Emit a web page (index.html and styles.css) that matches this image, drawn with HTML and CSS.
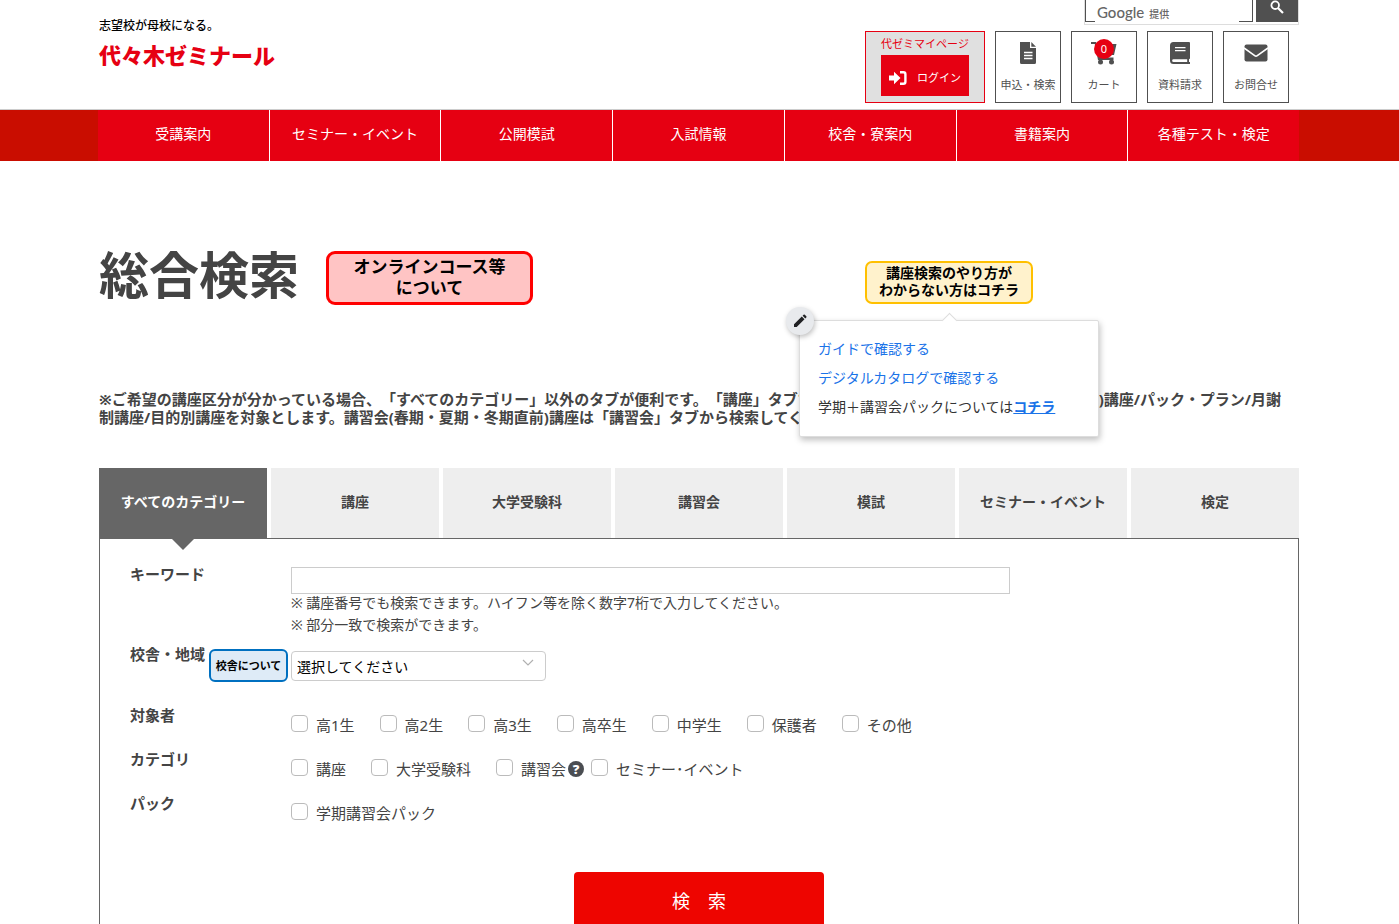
FILE: index.html
```
<!DOCTYPE html>
<html lang="ja">
<head>
  <meta charset="UTF-8" />
  <meta name="viewport" content="width=device-width, initial-scale=1" />
  <title>総合検索 | 代々木ゼミナール</title>
  <link rel="stylesheet" href="styles.css">
</head>
<body>
  <header class="header">
    <div class="header-inner">
      <a class="logo" href="#">
        <span class="logo-copy">志望校が母校になる。</span>
        <span class="logo-name">代々木ゼミナール</span>
      </a>

      <div class="header-right">
        <form class="site-search">
          <input type="text" class="site-search-input" aria-label="サイト内検索">
          <span class="site-search-brand"><span class="google">Google</span>提供</span>
          <button type="button" class="site-search-btn" aria-label="検索する">
            <svg width="14" height="14" viewBox="0 0 14 14"><circle cx="5.2" cy="5.2" r="3.8" fill="none" stroke="#fff" stroke-width="1.8"/><path d="M8 8l5 5" stroke="#fff" stroke-width="2.2"/></svg>
          </button>
        </form>

        <div class="tools">
          <div class="mypage">
            <span>代ゼミマイページ</span>
            <a class="login" href="#">
              <svg width="18" height="14" viewBox="0 0 18 14"><path d="M0 4.5h5V0.8L11.5 7 5 13.2V9.5H0z" fill="#fff"/><path d="M11 1.2h3.4a2 2 0 0 1 2 2v7.6a2 2 0 0 1-2 2H11" fill="none" stroke="#fff" stroke-width="2.4"/></svg>
              ログイン
            </a>
          </div>
          <a class="tool" href="#">
            <svg width="24" height="24" viewBox="0 0 24 24"><path d="M4 1h10v6h6v14.500a1.500 1.500 0 0 1-1.500 1.500h-13A1.500 1.500 0 0 1 4 21.500z" fill="#505050"/><path d="M15.300 1l4.700 4.800h-4.700z" fill="#505050"/><path d="M8 11.500h8.500M8 14.500h8.500M8 17.500h8.500" stroke="#fff" stroke-width="1.300"/></svg>
            申込・検索
          </a>
          <a class="tool" href="#">
            <svg width="26" height="24" viewBox="0 0 26 24"><path d="M0 1h5l.8 2H25.500L23 14H9l.5 2.500H22.500v2.500H7L3.800 3H0z" fill="#505050"/><circle cx="9.500" cy="21" r="2.500" fill="#505050"/><circle cx="20.500" cy="21" r="2.500" fill="#505050"/></svg>
            カート
            <span class="cart-count">0</span>
          </a>
          <a class="tool" href="#">
            <svg width="24" height="24" viewBox="0 0 24 24"><path d="M5.500 1H21a1 1 0 0 1 1 1v15.500l-1 .8v2.700h1v2H5.500A3.500 3.500 0 0 1 2 19.500v-15A3.500 3.500 0 0 1 5.500 1z" fill="#505050"/><path d="M5.500 18.300h13.700v2.700H5.500a1.300 1.300 0 0 1 0-2.700z" fill="#fff"/><path d="M7 6.700h10.500M7 9.700h10.500" stroke="#fff" stroke-width="1.300"/></svg>
            資料請求
          </a>
          <a class="tool" href="#">
            <svg width="24" height="24" viewBox="0 0 24 24"><rect x="0.500" y="3.500" width="23" height="17" rx="2" fill="#505050"/><path d="M0 7l10.700 7.700q1.300 1 2.600 0L24 7" fill="none" stroke="#fff" stroke-width="1.600"/></svg>
            お問合せ
          </a>
        </div>
      </div>
    </div>
  </header>

  <nav class="gnav">
    <ul class="gnav-list">
      <li><a href="#">受講案内</a></li>
      <li><a href="#">セミナー・イベント</a></li>
      <li><a href="#">公開模試</a></li>
      <li><a href="#">入試情報</a></li>
      <li><a href="#">校舎・寮案内</a></li>
      <li><a href="#">書籍案内</a></li>
      <li><a href="#">各種テスト・検定</a></li>
    </ul>
  </nav>

  <main class="main">
    <div class="title-row">
      <h1>総合検索</h1>
      <button type="button" class="online-btn">オンラインコース等<br>について</button>
      <div class="guide">
        <button type="button" class="guide-btn">講座検索のやり方が<br>わからない方はコチラ</button>
        <div class="popup">
          <button type="button" class="popup-edit" aria-label="編集">
            <svg width="14" height="14" viewBox="0 0 14 14"><path d="M1 10.300L8.800 2.500l2.700 2.700L3.700 13H1zM9.600 1.700l1-1q.6-.5 1.200 0l1.500 1.500q.5.600 0 1.200l-1 1z" fill="#202124"/></svg>
          </button>
          <p><a href="#">ガイドで確認する</a></p>
          <p><a href="#">デジタルカタログで確認する</a></p>
          <p>学期＋講習会パックについては<a class="strong-link" href="#">コチラ</a></p>
        </div>
      </div>
    </div>

    <p class="notice">※ご希望の講座区分が分かっている場合、「すべてのカテゴリー」以外のタブが便利です。「講座」タブでは、大学受験科以外の学期(1・2・3各学期)講座/パック・プラン/月謝制講座/目的別講座を対象とします。講習会(春期・夏期・冬期直前)講座は「講習会」タブから検索してください。</p>

    <div class="tabs">
      <button type="button" class="tab active">すべてのカテゴリー</button>
      <button type="button" class="tab">講座</button>
      <button type="button" class="tab">大学受験科</button>
      <button type="button" class="tab">講習会</button>
      <button type="button" class="tab">模試</button>
      <button type="button" class="tab">セミナー・イベント</button>
      <button type="button" class="tab">検定</button>
    </div>

    <form class="panel">
      <div class="row row-keyword">
        <label class="row-label" for="keyword">キーワード</label>
        <div>
          <input type="text" id="keyword" class="keyword">
          <p class="hint">※ 講座番号でも検索できます。ハイフン等を除く数字7桁で入力してください。</p>
          <p class="hint">※ 部分一致で検索ができます。</p>
        </div>
      </div>

      <div class="row row-campus">
        <div class="campus-head">
          <label class="row-label" for="campus">校舎・地域</label>
          <button type="button" class="campus-btn">校舎について</button>
        </div>
        <div class="select-wrap">
          <select id="campus">
            <option>選択してください</option>
          </select>
          <svg class="select-arrow" width="12" height="8" viewBox="0 0 12 8"><path d="M1 1l5 5 5-5" fill="none" stroke="#b0b0b0" stroke-width="1.200"/></svg>
        </div>
      </div>

      <div class="row" role="group" aria-labelledby="lb-target">
        <span class="row-label" id="lb-target">対象者</span>
        <div class="checks">
          <label><input type="checkbox" name="target">高1生</label>
          <label><input type="checkbox" name="target">高2生</label>
          <label><input type="checkbox" name="target">高3生</label>
          <label><input type="checkbox" name="target">高卒生</label>
          <label><input type="checkbox" name="target">中学生</label>
          <label><input type="checkbox" name="target">保護者</label>
          <label><input type="checkbox" name="target">その他</label>
        </div>
      </div>

      <div class="row" role="group" aria-labelledby="lb-category">
        <span class="row-label" id="lb-category">カテゴリ</span>
        <div class="checks">
          <label><input type="checkbox" name="category">講座</label>
          <label><input type="checkbox" name="category">大学受験科</label>
          <div class="with-help">
            <label><input type="checkbox" name="category">講習会</label>
            <button type="button" class="help" aria-label="講習会について">?</button>
            <label><input type="checkbox" name="category">セミナー･イベント</label>
          </div>
        </div>
      </div>

      <div class="row" role="group" aria-labelledby="lb-pack">
        <span class="row-label" id="lb-pack">パック</span>
        <div class="checks">
          <label><input type="checkbox" name="pack">学期講習会パック</label>
        </div>
      </div>

      <button type="submit" class="submit">検　索</button>
    </form>
  </main>
</body>
</html>
```
FILE: styles.css
```
* {
  box-sizing: border-box;
}
body {
  margin: 0;
  font-family: "Noto Sans", "Noto Sans CJK JP", sans-serif;
  font-size: 15px;
  text-spacing-trim: space-all;
  color: #444;
  background: #fff;
}
p, h1, ul {
  margin: 0;
  padding: 0;
}
a {
  color: inherit;
  text-decoration: none;
}
button, input, select {
  font-family: inherit;
}
button {
  padding: 0;
  cursor: pointer;
}

/* header */
.header {
  border-bottom: 1px solid #ccc;
}
.header-inner {
  display: flex;
  justify-content: space-between;
  max-width: 1201px;
  margin: 0 auto;
  padding: 0 1px 6px 0;
}
.logo {
  display: flex;
  flex-direction: column;
  padding-top: 17px;
}
.logo-copy {
  font-size: 12px;
  font-weight: 500;
  line-height: 18px;
  color: #000;
}
.logo-name {
  font-size: 22px;
  font-weight: 900;
  line-height: 40px;
  color: #e60012;
}
.header-right {
  display: flex;
  flex-direction: column;
  align-items: flex-end;
}
.site-search {
  position: relative;
  display: flex;
  gap: 3px;
  width: 215px;
  height: 25px;
  border: 1px solid #ddd;
  border-top: none;
}
.site-search-input {
  flex: 1;
  min-width: 0;
  height: 22px;
  border: 1px solid #505050;
  border-top: none;
}
.site-search-brand {
  position: absolute;
  left: 10px;
  top: 2px;
  width: 144px;
  height: 21px;
  padding-left: 2px;
  font-size: 10px;
  font-weight: 500;
  line-height: 21px;
  color: #666;
  background: #fff;
}
.google {
  margin-right: 5px;
  font-family: Lato, sans-serif;
  font-size: 15px;
}
.site-search-btn {
  width: 42px;
  height: 22px;
  padding-bottom: 4px;
  border: none;
  background: #505050;
}
.tools {
  display: flex;
  gap: 10px;
  margin: 6px 10px 0 0;
}
.mypage {
  display: flex;
  flex-direction: column;
  align-items: center;
  width: 120px;
  height: 72px;
  border: 1px solid #e60012;
  font-size: 11px;
  line-height: 23px;
  color: #e60012;
  background: #e0e0e0;
}
.login {
  display: flex;
  align-items: center;
  justify-content: center;
  gap: 10px;
  width: 88px;
  height: 41px;
  padding-top: 4px;
  color: #fff;
  background: #e60012;
}
.tool {
  position: relative;
  display: flex;
  flex-direction: column;
  align-items: center;
  gap: 11px;
  width: 66px;
  height: 72px;
  padding-top: 9px;
  border: 1px solid #505050;
  font-size: 11px;
  line-height: 18px;
  color: #505050;
}
.cart-count {
  position: absolute;
  top: 7px;
  left: 22px;
  width: 20px;
  height: 20px;
  border-radius: 50%;
  font-size: 11px;
  line-height: 20px;
  text-align: center;
  color: #fff;
  background: #e60012;
}

/* global nav */
.gnav {
  padding-right: 2px;
  background: #c90d00;
}
.gnav-list {
  display: flex;
  max-width: 1201px;
  margin: 0 auto;
  list-style: none;
  background: #e60012;
}
.gnav-list li {
  flex: 1;
}
.gnav-list li + li {
  border-left: 1px solid #fff;
}
.gnav-list a {
  display: block;
  padding-bottom: 3px;
  font-size: 14px;
  line-height: 48px;
  text-align: center;
  color: #fff;
}

/* title */
.main {
  max-width: 1201px;
  margin: 0 auto;
  padding-right: 1px;
}
.title-row {
  display: flex;
  align-items: flex-start;
  padding-top: 90px;
}
h1 {
  margin-right: 27px;
  font-size: 50px;
  line-height: 48px;
}
.online-btn {
  width: 207px;
  height: 54px;
  padding-bottom: 3px;
  border: 3px solid #f00;
  border-radius: 9px;
  font-size: 17px;
  font-weight: 700;
  line-height: 21px;
  color: #000;
  background: #ffc4c4;
}
.guide {
  position: relative;
  margin: 10px 266px 0 auto;
}
.guide-btn {
  width: 168px;
  height: 43px;
  padding-bottom: 4px;
  border: 2px solid #ffc000;
  border-radius: 7px;
  font-size: 14px;
  font-weight: 700;
  line-height: 17px;
  color: #000;
  background: #fff2cc;
}
.popup {
  position: absolute;
  top: 59px;
  left: -66px;
  z-index: 1;
  width: 300px;
  padding: 13px 18px 15px;
  border: 1px solid #ddd;
  border-radius: 2px;
  font-size: 14px;
  line-height: 29px;
  color: #333;
  background: #fff;
  box-shadow: 1px 3px 6px rgba(0,0,0,0.25);
}
.popup::before {
  content: "";
  position: absolute;
  top: -6px;
  left: 144px;
  width: 10px;
  height: 10px;
  border: 1px solid #ddd;
  border-right: none;
  border-bottom: none;
  background: #fff;
  transform: rotate(45deg);
}
.popup a {
  color: #1a73e8;
}
.popup .strong-link {
  font-weight: 700;
  text-decoration: underline;
}
.popup-edit {
  position: absolute;
  top: -14px;
  left: -14px;
  display: flex;
  align-items: center;
  justify-content: center;
  width: 28px;
  height: 28px;
  border: none;
  border-radius: 50%;
  background: #e8eaed;
  box-shadow: 1px 2px 5px rgba(0,0,0,0.25);
}
.notice {
  margin-top: 85px;
  padding-right: 10px;
  font-size: 15px;
  font-weight: 700;
  line-height: 18px;
}

/* tabs */
.tabs {
  display: flex;
  gap: 4px;
  margin-top: 42px;
}
.tab {
  position: relative;
  flex: 1;
  height: 70px;
  padding-bottom: 4px;
  border: none;
  font-size: 14px;
  font-weight: 700;
  color: #444;
  background: #eee;
}
.tab.active {
  color: #fff;
  background: #666;
}
.tab.active::after {
  content: "";
  position: absolute;
  top: 70px;
  left: 50%;
  margin-left: -12px;
  border: 12px solid transparent;
  border-top-color: #666;
  border-bottom: none;
}

/* search form */
.panel {
  padding: 28px 30px 60px;
  border: 1px solid #666;
}
.row {
  display: grid;
  grid-template-columns: 161px 1fr;
  height: 44px;
}
.row-label {
  font-size: 15px;
  font-weight: 700;
  line-height: 15px;
}
.row-keyword {
  height: 84px;
}
.keyword {
  display: block;
  width: 74%;
  max-width: 719px;
  height: 27px;
  padding: 0 6px;
  border: 1px solid #ccc;
  font-size: 14px;
}
.hint {
  font-size: 14px;
  line-height: 22px;
}
.keyword + .hint {
  margin-top: -2px;
}
.row-campus {
  height: 57px;
}
.campus-head {
  display: flex;
  align-items: flex-start;
  gap: 4px;
  margin-top: -4px;
}
.campus-btn {
  width: 79px;
  height: 33px;
  margin-top: 2px;
  padding-bottom: 2px;
  border: 2px solid #0070c0;
  border-radius: 6px;
  font-size: 11px;
  font-weight: 700;
  color: #000;
  background: #deebf7;
}
.select-wrap {
  position: relative;
  width: 255px;
  height: 30px;
}
.select-wrap select {
  width: 100%;
  height: 30px;
  padding: 0 5px;
  border: 1px solid #ccc;
  border-radius: 4px;
  font-size: 14px;
  color: #000;
  background: #fff;
  appearance: none;
}
.select-arrow {
  position: absolute;
  top: 8px;
  right: 12px;
  pointer-events: none;
}
.checks {
  display: flex;
  align-items: flex-start;
  gap: 25px;
  padding-top: 6px;
}
.checks label {
  display: flex;
  align-items: center;
  gap: 8px;
  line-height: 22px;
}
.checks input {
  width: 17px;
  height: 17px;
  margin: 0 0 4px;
  border: 1px solid #bbb;
  border-radius: 4px;
  background: #fff;
  appearance: none;
}
.with-help {
  display: flex;
  align-items: center;
}
.help {
  width: 16px;
  height: 16px;
  margin: 0 7px 0 2px;
  border: none;
  border-radius: 50%;
  font-size: 13px;
  font-weight: 900;
  line-height: 16px;
  color: #fff;
  background: #4a4d52;
}
.submit {
  display: block;
  width: 250px;
  height: 58px;
  margin: 32px auto 0;
  padding-bottom: 3px;
  border: none;
  border-radius: 4px;
  font-size: 18px;
  color: #fff;
  background: #ee0500;
}
```
